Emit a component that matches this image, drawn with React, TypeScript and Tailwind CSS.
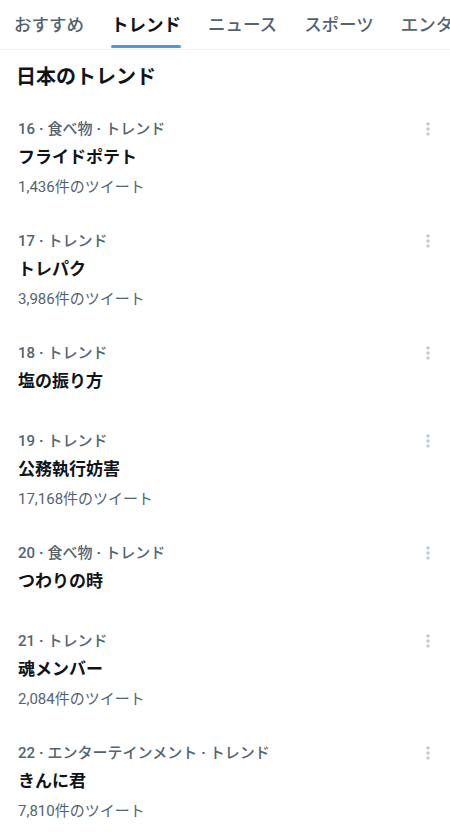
import React from "react";

const tabs = ["おすすめ", "トレンド", "ニュース", "スポーツ", "エンターテインメント"];

type Trend = { meta: string[]; title: string; count?: string };

const trends: Trend[] = [
  { meta: ["16", "食べ物", "トレンド"], title: "フライドポテト", count: "1,436件のツイート" },
  { meta: ["17", "トレンド"], title: "トレパク", count: "3,986件のツイート" },
  { meta: ["18", "トレンド"], title: "塩の振り方" },
  { meta: ["19", "トレンド"], title: "公務執行妨害", count: "17,168件のツイート" },
  { meta: ["20", "食べ物", "トレンド"], title: "つわりの時" },
  { meta: ["21", "トレンド"], title: "魂メンバー", count: "2,084件のツイート" },
  { meta: ["22", "エンターテインメント", "トレンド"], title: "きんに君", count: "7,810件のツイート" },
];

function Dots() {
  return (
    <svg width="16" height="16" viewBox="0 0 16 16" className="shrink-0">
      <rect x="6.5" y="1.5" width="3" height="3" rx="0.8" fill="#bccad6" />
      <rect x="6.5" y="6.5" width="3" height="3" rx="0.8" fill="#bccad6" />
      <rect x="6.5" y="11.5" width="3" height="3" rx="0.8" fill="#bccad6" />
    </svg>
  );
}

export default function App() {
  return (
    <div
      className="w-[450px] h-[835px] overflow-hidden bg-white"
      style={{ fontFamily: '"Roboto", "Noto Sans CJK JP", sans-serif' }}
    >
      <div className="h-[50px] border-b border-[#eff3f4] flex gap-[27px] pl-[14px] overflow-hidden whitespace-nowrap">
        {tabs.map((t, i) => (
          <div key={t} className="flex flex-col items-center h-[49px] shrink-0">
            <div
              className={
                "flex-1 flex items-center pt-[5px] text-[17.5px] " +
                (i === 1 ? "font-bold text-[#0f1419]" : "font-medium text-[#536471]")
              }
            >
              {t}
            </div>
            <div
              className={
                "h-[3px] w-full rounded-full mb-[1px] " + (i === 1 ? "bg-[#4b98e8]" : "bg-transparent")
              }
            />
          </div>
        ))}
      </div>
      <div className="h-[52px] flex items-center pl-[16px] pt-[1px] text-[20px] font-bold text-[#0f1419]">
        日本のトレンド
      </div>
      {trends.map((tr) => (
        <div key={tr.title} className="pl-[18px] pr-[14px] pt-[15px] pb-[15px]">
          <div className="h-[24px] flex items-center justify-between">
            <span className="flex items-center gap-[4px] text-[15px] font-medium text-[#536471]">
              {tr.meta.map((m, j) => (
                <React.Fragment key={j}>
                  {j > 0 && <span className="font-bold">·</span>}
                  <span>{m}</span>
                </React.Fragment>
              ))}
            </span>
            <Dots />
          </div>
          <div className="h-[34px] flex items-center text-[17px] font-semibold text-[#0f1419]">{tr.title}</div>
          {tr.count && (
            <div className="h-[24px] flex items-center text-[15px] text-[#536471]">{tr.count}</div>
          )}
        </div>
      ))}
    </div>
  );
}
